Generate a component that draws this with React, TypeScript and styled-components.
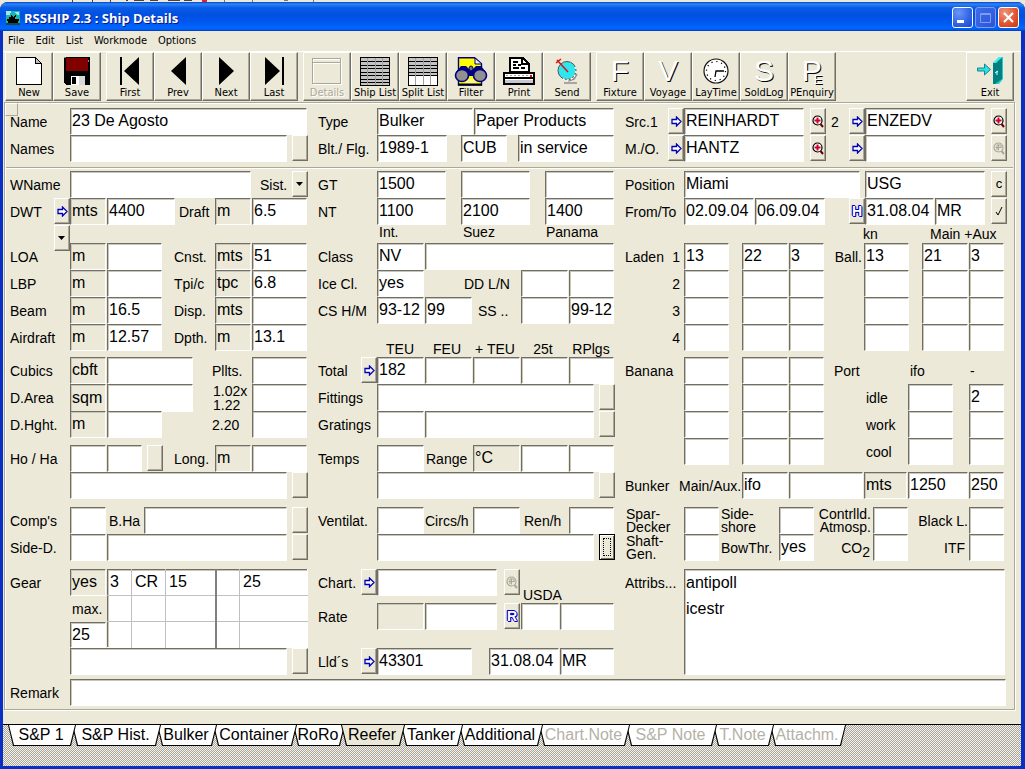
import React from "react";
import styled, { createGlobalStyle, css } from "styled-components";

const face = "#ece9d8";
const dark = "#716f64";
const sans = '"Liberation Sans", Arial, sans-serif';
const ui = '"DejaVu Sans Condensed", Tahoma, "Liberation Sans", sans-serif';

const GlobalStyle = createGlobalStyle`
  *, *::before, *::after { box-sizing: border-box; }
  body { margin: 0; background: ${face}; font-family: ${sans}; color: #000; }
  button, input, select, textarea { font: inherit; color: inherit; margin: 0; border-radius: 0; }
`;

/* ---------- window frame ---------- */

const Desktop = styled.div`
  min-height: 100vh;
  min-width: 960px;
  display: flex;
  flex-direction: column;
`;

const BackStrip = styled.div`
  height: 2px;
  overflow: hidden;
  svg { display: block; margin-left: 72px; }
`;

const Window = styled.main`
  flex: 1;
  display: flex;
  flex-direction: column;
  background: #0a2fc4;
  border-radius: 8px 8px 0 0;
  overflow: hidden;
`;

const TitleBar = styled.header`
  height: 29px;
  display: flex;
  align-items: center;
  gap: 2px;
  padding: 2px 6px 0 6px;
  background: linear-gradient(#0a3fd0 0, #2a86f5 7%, #0a5be6 20%, #0050e0 45%, #0058ee 70%, #0066ff 88%, #0060f8 94%, #0038b8 100%);
`;

const Title = styled.h1`
  flex: 1;
  margin: 0;
  padding-left: 2px;
  color: #fff;
  font: 700 13px/16px "Open Sans", "Noto Sans", sans-serif;
  text-shadow: 1px 1px 0 #0a1883;
`;

const CaptionButton = styled.button<{ $tone: "blue" | "dim" | "red" }>`
  width: 21px;
  height: 21px;
  padding: 0;
  border-radius: 3px;
  border: 1px solid ${(p) => (p.$tone === "dim" ? "#7f9cf0" : "#fff")};
  background: ${(p) =>
    p.$tone === "red"
      ? "radial-gradient(circle at 30% 25%, #f0937a, #e2512c 60%, #c03a14)"
      : p.$tone === "dim"
        ? "linear-gradient(135deg, #3f6ce8, #2a55dc)"
        : "radial-gradient(circle at 30% 25%, #6b96f8, #2f62e4 60%, #1c49c8)"};
  svg { display: block; }
`;

const Client = styled.div`
  flex: 1;
  display: flex;
  flex-direction: column;
  margin: 0 4px 3px 3px;
  background: ${face};
`;

/* ---------- menu and toolbar ---------- */

const MenuBar = styled.nav`
  height: 20px;
  display: flex;
  align-items: center;
  gap: 11px;
  padding-left: 5px;
`;

const MenuItem = styled.button`
  border: 0;
  padding: 0;
  background: none;
  font: 11px/14px ${ui};
`;

const Toolbar = styled.div`
  display: flex;
  gap: 5px;
  padding: 0 7px 0 2px;
  border-top: 1px solid #fff;
`;

const ToolGroup = styled.div<{ $last?: boolean }>`
  display: flex;
  margin-left: ${(p) => (p.$last ? "auto" : "0")};
`;

const ToolButton = styled.button`
  width: 48px;
  height: 49px;
  padding: 3px 0 0;
  display: flex;
  flex-direction: column;
  align-items: center;
  background: ${face};
  border: 1px solid;
  border-color: #fff ${dark} ${dark} #fff;
  box-shadow: inset -1px -1px 0 #aca899;
  font: 11px/14px ${ui};
  white-space: nowrap;
  &:disabled { color: #aca899; text-shadow: 1px 1px 0 #fff; }
`;

const ToolIcon = styled.span`
  height: 30px;
  display: flex;
  align-items: center;
  justify-content: center;
  svg { display: block; }
`;

const Letter = styled.span<{ $small?: boolean }>`
  color: #fff;
  font: ${(p) => (p.$small ? "13px/13px" : "30px/30px")} ${sans};
  align-self: ${(p) => (p.$small ? "flex-end" : "center")};
  margin-left: ${(p) => (p.$small ? "-8px" : "0")};
  text-shadow: 1px 1px 0 #000;
`;

/* ---------- form ---------- */

const Panel = styled.form`
  position: relative;
  margin: 1px 6px 14px 1px;
  padding: 5px 7px 3px 5px;
  border: 1px solid #aca899;
  box-shadow: inset 1px 1px 0 #fff, 1px 1px 0 #fff;
`;

const Corner = styled.span`
  position: absolute;
  left: 0;
  top: 0;
  width: 13px;
  height: 13px;
  border: 1px solid;
  border-color: #fff #aca899 #aca899 #fff;
`;

const Divider = styled.hr`
  height: 2px;
  margin: 5px -6px 2px -4px;
  border: 0;
  border-top: 1px solid #aca899;
  border-bottom: 1px solid #fff;
`;

const Band = styled.section<{ $gap?: number }>`
  display: grid;
  grid-template-columns: 298fr 297fr 382fr;
  column-gap: 10px;
  margin-bottom: ${(p) => p.$gap ?? 0}px;
`;

const Column = styled.div<{ $split?: boolean }>`
  display: flex;
  flex-direction: column;
  min-width: 0;
  ${(p) => p.$split && "justify-content: space-between; gap: 7px;"}
`;

const Row = styled.div<{ $c: number[]; $h?: number; $align?: string }>`
  display: grid;
  grid-template-columns: ${(p) => p.$c.map((n) => `minmax(0, ${n}fr)`).join(" ")};
  height: ${(p) => p.$h ?? 27}px;
  align-items: ${(p) => p.$align ?? "stretch"};
`;

const Gap = styled.span``;

const captionStyle = css<{ $end?: boolean; $pad?: number; $high?: boolean }>`
  align-self: ${(p) => (p.$high ? "start" : "center")};
  font-size: 14px;
  line-height: ${(p) => (p.$high ? 14 : 16)}px;
  white-space: nowrap;
  text-align: ${(p) => (p.$end ? "right" : "left")};
  padding: 0 ${(p) => (p.$end ? p.$pad ?? 0 : 0)}px 0 ${(p) => (p.$end ? 0 : p.$pad ?? 0)}px;
  ${(p) => p.$end && "justify-self: end;"}
  sub { font-size: 14px; line-height: 0; }
`;
const Caption = styled.label`${captionStyle}`;
const Heading = styled.span`${captionStyle}`;

const CenterHeading = styled.span`
  font-size: 14px;
  line-height: 16px;
  text-align: center;
  white-space: nowrap;
`;

const LowHeading = styled.span`
  align-self: end;
  padding-left: 3px;
  font-size: 14px;
  line-height: 16px;
`;

const TwoLine = styled.label<{ $end?: boolean; $tall?: boolean }>`
  align-self: center;
  font-size: 14px;
  line-height: ${(p) => (p.$tall ? 14 : 13)}px;
  white-space: pre;
  padding-left: 1px;
  ${(p) => p.$end && "text-align: right; padding-right: 2px;"}
`;

const sunken = css`
  border: 1px solid;
  border-color: ${dark} #fff #fff ${dark};
  box-shadow: inset 1px 1px 0 #c8c5ba;
  outline: 0;
`;

const Field = styled.input.attrs({ type: "text" })<{ $unit?: boolean }>`
  ${sunken}
  width: calc(100% - 1px);
  height: 100%;
  min-width: 0;
  padding: 0 0 1px 1px;
  font-size: 16px;
  background: ${(p) => (p.$unit ? face : "#fff")};
`;

const Memo = styled.textarea`
  ${sunken}
  width: 100%;
  height: 100%;
  padding: 0 1px;
  font-size: 16px;
  line-height: 26px;
  resize: none;
  overflow: hidden;
  display: block;
  background: #fff;
`;

const raised = css`
  width: 16px;
  height: 26px;
  justify-self: end;
  padding: 0;
  background: ${face};
  border: 1px solid;
  border-color: #fff ${dark} ${dark} #fff;
  box-shadow: inset -1px -1px 0 #aca899;
`;

const MiniButton = styled.button.attrs({ type: "button" })<{ $focus?: boolean }>`
  ${raised}
  display: flex;
  align-items: center;
  justify-content: center;
  font-size: 13px;
  line-height: 16px;
  svg { display: block; flex: none; }
  ${(p) =>
    p.$focus &&
    css`
      border-color: #000;
      outline: 1px dotted #000;
      outline-offset: -5px;
      box-shadow: inset 1px 1px 0 #fff, inset -1px -1px 0 ${dark};
    `}
`;

const Outlined = styled.span`
  color: #fff;
  font-size: 14px;
  font-weight: 700;
  text-shadow: 1px 0 #00c, -1px 0 #00c, 0 1px #00c, 0 -1px #00c, 1px 1px #00c, -1px -1px #00c;
`;

const DropShell = styled.span`
  position: relative;
  justify-self: end;
  width: 16px;
  height: 26px;
  svg { position: absolute; left: 4px; top: 11px; pointer-events: none; }
`;

const Drop = styled.select`
  ${raised}
  appearance: none;
  display: block;
`;

const GearStack = styled.div`
  display: grid;
  grid-template-rows: 27px 26px 26px;
`;

const GearTable = styled.table`
  ${sunken}
  width: 100%;
  height: 79px;
  table-layout: fixed;
  border-collapse: collapse;
  background: #fff;
  td {
    padding: 0 0 2px 3px;
    height: 26px;
    font-size: 16px;
    line-height: 20px;
    white-space: nowrap;
    border: 1px solid #c0c0c0;
  }
  td:first-child { border-left: 0; padding-left: 2px; }
  td:last-child { border-right: 0; }
  tr:first-child td { border-top: 0; }
  tr:last-child td { border-bottom: 0; }
  td:nth-child(4) { border-left: 2px solid #808080; }
`;

/* ---------- bottom tabs ---------- */

const TabStrip = styled.div`
  flex: 1;
  min-height: 42px;
  display: flex;
  align-items: flex-start;
  padding-left: 5px;
  border-top: 1px solid #000;
  background: repeating-conic-gradient(#a8a69c 0 25%, #f4f2ea 0 50%) 0 0 / 2px 2px;
`;

const Tab = styled.button<{ $w: number; $order: number; $on?: boolean }>`
  position: relative;
  z-index: ${(p) => (p.$on ? 20 : p.$order)};
  width: ${(p) => p.$w}px;
  height: 21px;
  flex: none;
  margin-right: -4px;
  padding: 0 2px 2px 0;
  border: 0;
  background: none;
  isolation: isolate;
  font-size: 16px;
  line-height: 18px;
  white-space: nowrap;
  &:disabled { color: #b4b1a6; }
  &::before, &::after {
    content: "";
    position: absolute;
    inset: 0;
    z-index: -2;
    background: #000;
    clip-path: polygon(0 0, 100% 0, calc(100% - 5px) 100%, 5px 100%);
  }
  &::after {
    inset: 0 1px 1px 1px;
    z-index: -1;
    background: ${(p) => (p.$on ? face : "#fff")};
  }
`;

/* ---------- icons ---------- */

const Arrow = () => (
  <svg width="11" height="11" viewBox="0 0 11 11">
    <path d="M1 3.500h4.500V1L10 5.500 5.500 10V7.500H1z" fill="#fff" stroke="#0000b8" strokeWidth="1.300" />
  </svg>
);
const Lens = ({ off }: { off?: boolean }) => (
  <svg width="12" height="13" viewBox="0 0 12 13">
    <circle cx="5.500" cy="5.500" r="4.500" fill={off ? "none" : "#fff"} stroke={off ? "#aca899" : "#000"} strokeWidth="1.200" />
    <path d="M5.500 2.500v6M2.500 5.500h6" stroke={off ? "#aca899" : "#d0002a"} strokeWidth={off ? 1 : 2} />
    {off && <path d="M4 8V3h4v3" fill="none" stroke="#aca899" />}
    <path d="M8.500 9l2.500 3" stroke={off ? "#aca899" : "#600"} strokeWidth="2" />
  </svg>
);
const Down = () => (
  <svg width="7" height="4" viewBox="0 0 7 4"><path d="M0 0h7L3.500 4z" /></svg>
);
const Check = () => (
  <svg width="9" height="10" viewBox="0 0 9 10"><path d="M1 6l2 3 4-8" fill="none" stroke="#000" /></svg>
);

const AppIcon = () => (
  <svg width="14" height="14" viewBox="0 0 14 14" shapeRendering="crispEdges">
    <path d="M0 0h14v14H0z" fill="#19b5b0" />
    <path d="M0 0h5l-1 4H0zM9 1h4v3h-2z" fill="#9fe8ea" />
    <path d="M1 8h2V6h2V4l2 2h1l2-3v2L9 8h4l-1 4H2z" />
    <path d="M0 12h14v2H0z" fill="#0b4f50" />
  </svg>
);

const icons: Record<string, React.ReactNode> = {
  New: (
    <svg width="26" height="28" viewBox="0 0 26 28" shapeRendering="crispEdges">
      <path d="M.500.500h19l6 6v21H.500z" fill="#fff" stroke="#000" />
      <path d="M19.500.500v6h6z" fill="#c0c0c0" stroke="#000" />
    </svg>
  ),
  Save: (
    <svg width="26" height="28" viewBox="0 0 26 28" shapeRendering="crispEdges">
      <path d="M0 0h26v28H2l-2-2z" />
      <path d="M2 1h22v13H2z" fill="#800000" />
      <path d="M0 0h2v1H0zM24 3h1v2h-1z" fill="#888" />
      <path d="M7 19h14v9H7z" fill="#fff" />
      <path d="M8 20h4v7H8z" />
      <path d="M15 19h6v9h-6z" fill="#d8d8d8" />
    </svg>
  ),
  First: (
    <svg width="20" height="28" viewBox="0 0 20 28"><path d="M0 0h2v28H0zM19 0v28L4 14z" /></svg>
  ),
  Prev: (
    <svg width="15" height="28" viewBox="0 0 15 28"><path d="M15 0v28L0 14z" /></svg>
  ),
  Next: (
    <svg width="15" height="28" viewBox="0 0 15 28"><path d="M0 0v28l15-14z" /></svg>
  ),
  Last: (
    <svg width="20" height="28" viewBox="0 0 20 28"><path d="M18 0h2v28h-2zM1 0v28l15-14z" /></svg>
  ),
  Details: (
    <svg width="30" height="27" viewBox="0 0 30 27" shapeRendering="crispEdges">
      <path d="M1.500 1.500h28v25h-28zM1.500 5.500h28" fill="none" stroke="#fff" />
      <path d="M.500.500h28v25H.500zM.500 4.500h28" fill="none" stroke="#aca899" />
    </svg>
  ),
  "Ship List": (
    <svg width="30" height="29" viewBox="0 0 30 29" shapeRendering="crispEdges">
      <path d="M.500.500h29v28H.500z" fill="#c4c4c4" stroke="#000" />
      <path d="M0 4.500h30M0 8.500h30M0 11.500h30M0 15.500h30M0 18.500h30M0 22.500h30M0 25.500h30" stroke="#000" />
      <path d="M7.500 1v27M15.500 1v27M22.500 1v27" stroke="#a0a0a0" />
    </svg>
  ),
  "Split List": (
    <svg width="30" height="29" viewBox="0 0 30 29" shapeRendering="crispEdges">
      <path d="M.500.500h29v28H.500z" fill="#c4c4c4" stroke="#000" />
      <path d="M1 19h28v9H1z" fill="#fff" />
      <path d="M0 4.500h30M0 8.500h30M0 11.500h30M0 15.500h30M0 18.500h30" stroke="#000" />
      <path d="M7.500 1v27M15.500 1v27M22.500 1v27" stroke="#a0a0a0" />
    </svg>
  ),
  Filter: (
    <svg width="34" height="29" viewBox="0 0 34 29">
      <path d="M4.500.700h16l7 6V28h-23z" fill="#ff0" stroke="#000080" strokeWidth="1.400" />
      <path d="M21 1v6h7z" fill="#eee" stroke="#000080" />
      <path d="M2 15l5-6h5l4 4 1-4 1 4 4-4h5l5 6v4H2z" fill="#000080" />
      <path d="M13 22h8l2 5H11z" fill="#fff68a" />
      <ellipse cx="8" cy="18.500" rx="6.500" ry="6" fill="#909090" stroke="#000080" strokeWidth="1.600" />
      <ellipse cx="26" cy="18.500" rx="6.500" ry="6" fill="#909090" stroke="#000080" strokeWidth="1.600" />
      <ellipse cx="17" cy="11.500" rx="2" ry="2.500" fill="#707070" stroke="#000080" />
      <path d="M4 27.500h24" stroke="#000" strokeWidth="2" />
    </svg>
  ),
  Print: (
    <svg width="32" height="28" viewBox="0 0 32 28" shapeRendering="crispEdges">
      <path d="M7 15V1h13l6 6v8z" fill="#fff" stroke="#000" strokeWidth="2" />
      <path d="M19 1v6h7M10 5h5M10 8h3M15 8h3M10 11h6M18 11h4" fill="none" stroke="#000" strokeWidth="2" />
      <path d="M1 16h30v11H1z" fill="#fff" stroke="#000" strokeWidth="2" />
      <path d="M2 21h28" stroke="#000" strokeWidth="2" />
      <path d="M3 18.500h24" stroke="#a0a0a0" strokeDasharray="2 2" />
      <path d="M2 23h28v3H2z" fill="#c8c8d0" />
      <path d="M27 18h2v2h-2z" fill="#e00" />
    </svg>
  ),
  Send: (
    <svg width="24" height="28" viewBox="0 0 24 28">
      <path d="M9 26h13M13 24l6-2 3-5M18 20l-5 3" fill="none" stroke="#909090" strokeWidth="1.600" />
      <circle cx="12" cy="13.500" r="9" fill="#2ee6ee" stroke="#555" />
      <path d="M20 10a9 9 0 0 1-12 12" fill="none" stroke="#fff" strokeWidth="1.500" strokeDasharray="2 2" />
      <path d="M2 3l11 12M1 6l5-4" fill="none" stroke="#d81818" strokeWidth="1.600" />
    </svg>
  ),
  Fixture: <Letter>F</Letter>,
  Voyage: <Letter>V</Letter>,
  LayTime: (
    <svg width="26" height="26" viewBox="0 0 26 26">
      <circle cx="13" cy="13" r="12" fill="#fff" stroke="#111" strokeWidth="1.200" />
      <circle cx="13" cy="13" r="9.500" fill="none" stroke="#000" strokeWidth="1.200" strokeDasharray="1.200 3.775" />
      <path d="M21 13h-8l-1 6" fill="none" stroke="#000" strokeWidth="1.300" />
    </svg>
  ),
  SoldLog: <Letter>S</Letter>,
  PEnquiry: (
    <>
      <Letter>P</Letter>
      <Letter $small>E</Letter>
    </>
  ),
  Exit: (
    <svg width="26" height="28" viewBox="0 0 26 28">
      <path d="M16 6l6-6h4v22l-4 5h-6z" fill="#20d0c8" />
      <path d="M16 6l9-5v21l-7 5h-2z" fill="#008080" />
      <path d="M16 6l6-6h3l-6 6z" fill="#40f0f0" />
      <path d="M20 14v4M18 16l3-2" stroke="#dff" fill="none" />
      <path d="M.500 11h7V7l6 5.500-6 5.500v-4h-7z" fill="#30e0e0" stroke="#108890" />
    </svg>
  ),
};

/* ---------- repeated form parts ---------- */

type TextProps = { name: string; v?: string; unit?: boolean };
const T = ({ name, v = "", unit }: TextProps) => (
  <Field id={name} aria-label={name} defaultValue={v} $unit={unit} readOnly={unit} />
);

const Go = ({ name }: { name: string }) => (
  <MiniButton aria-label={`Open ${name}`}><Arrow /></MiniButton>
);
const More = ({ name, focus }: { name: string; focus?: boolean }) => (
  <MiniButton aria-label={`More ${name}`} $focus={focus} />
);
const DropDown = ({ name }: { name: string }) => (
  <DropShell>
    <Drop aria-label={name}><option value="" /></Drop>
    <Down />
  </DropShell>
);

/* label, memo text and its expand button */
type WideProps = { label?: string; name: string; focus?: boolean; lead?: number };
const WideRow = ({ label, name, focus, lead = 60 }: WideProps) => (
  <Row $c={[lead, 218, 20]}>
    {label ? <Caption htmlFor={name}>{label}</Caption> : <Gap />}
    <T name={name} />
    <More name={name} focus={focus} />
  </Row>
);

const sizes = [
  ["LOA", "", "Cnst.", "mts", "51"],
  ["LBP", "", "Tpi/c", "tpc", "6.8"],
  ["Beam", "16.5", "Disp.", "mts", ""],
  ["Airdraft", "12.57", "Dpth.", "m", "13.1"],
];

const speeds = [
  ["13", "22", "3", "13", "21", "3"],
  ["", "", "", "", "", ""],
  ["", "", "", "", "", ""],
  ["", "", "", "", "", ""],
];

const gear = [
  ["3", "CR", "15", "", "25"],
  ["", "", "", "", ""],
  ["", "", "", "", ""],
];

const toolGroups = [
  ["New", "Save"],
  ["First", "Prev", "Next", "Last"],
  ["Details", "Ship List", "Split List", "Filter", "Print", "Send"],
  ["Fixture", "Voyage", "LayTime", "SoldLog", "PEnquiry"],
  ["Exit"],
];

const tabs: [string, number, boolean?][] = [
  ["S&P 1", 68],
  ["S&P Hist.", 89],
  ["Bulker", 60],
  ["Container", 84],
  ["RoRo", 52],
  ["Reefer", 64],
  ["Tanker", 62],
  ["Additional", 84],
  ["Chart.Note", 91, true],
  ["S&P Note", 91, true],
  ["T.Note", 61, true],
  ["Attachm.", 76, true],
];

const sourceCols = [43, 16, 121, 21, 22, 17, 121, 21];
const boxCols = [59, 36, 59, 36, 58, 36, 60, 36, 2];
const portCols = [59, 46, 12, 47, 36, 41, 42, 46, 15, 36, 2];

export default function App() {
  return (
    <Desktop>
      <GlobalStyle />
      <BackStrip>
        <svg width="244" height="2" viewBox="0 0 244 2" aria-hidden="true">
          <path d="M0 0h1v2H0zM20 0h1v2h-1zM38 0h1v2h-1zM54 0h2v1h-2zM62 0h10v1H62zM78 0h8v1h-8zM96 0h12v1H96zM112 0h8v1h-8z" fill="#444" />
          <path d="M130 0h5v2h-5z" fill="#e02030" />
          <path d="M152 0h1v2h-1zM180 0h1v2h-1zM212 0h4v1h-4zM241 0h1v2h-1z" fill="#777" />
        </svg>
      </BackStrip>
      <Window>
        <TitleBar>
          <AppIcon />
          <Title>RSSHIP 2.3 : Ship Details</Title>
          <CaptionButton $tone="blue" aria-label="Minimize">
            <svg width="19" height="19" viewBox="0 0 19 19"><path d="M4 12h7v3H4z" fill="#fff" /></svg>
          </CaptionButton>
          <CaptionButton $tone="dim" aria-label="Maximize">
            <svg width="19" height="19" viewBox="0 0 19 19">
              <path d="M4.500 5.500h10v9h-10zM4.500 6.500h10" fill="none" stroke="#7f9cf0" />
            </svg>
          </CaptionButton>
          <CaptionButton $tone="red" aria-label="Close">
            <svg width="19" height="19" viewBox="0 0 19 19">
              <path d="M5 5l9 9M14 5l-9 9" stroke="#fff" strokeWidth="2.200" />
            </svg>
          </CaptionButton>
        </TitleBar>

        <Client>
          <MenuBar>
            {["File", "Edit", "List", "Workmode", "Options"].map((m) => (
              <MenuItem key={m}>{m}</MenuItem>
            ))}
          </MenuBar>

          <Toolbar>
            {toolGroups.map((group) => (
              <ToolGroup key={group[0]} $last={group[0] === "Exit"}>
                {group.map((tool) => (
                  <ToolButton key={tool} disabled={tool === "Details"}>
                    <ToolIcon aria-hidden="true">{icons[tool]}</ToolIcon>
                    {tool}
                  </ToolButton>
                ))}
              </ToolGroup>
            ))}
          </Toolbar>

          <Panel>
            <Corner />
            <Band>
              <Column>
                <Row $c={[60, 238]}>
                  <Caption htmlFor="Name">Name</Caption>
                  <T name="Name" v="23 De Agosto" />
                </Row>
                <WideRow label="Names" name="Names" />
              </Column>
              <Column>
                <Row $c={[59, 97, 141]}>
                  <Caption htmlFor="Type">Type</Caption>
                  <T name="Type" v="Bulker" />
                  <T name="Cargo" v="Paper Products" />
                </Row>
                <Row $c={[59, 71, 13, 47, 10, 97]}>
                  <Caption htmlFor="Built">Blt./ Flg.</Caption>
                  <T name="Built" v="1989-1" />
                  <Gap />
                  <T name="Flag" v="CUB" />
                  <Gap />
                  <T name="Status" v="in service" />
                </Row>
              </Column>
              <Column>
                <Row $c={sourceCols}>
                  <Caption htmlFor="Source 1">Src.1</Caption>
                  <Go name="source 1" />
                  <T name="Source 1" v="REINHARDT" />
                  <MiniButton aria-label="Find source 1"><Lens /></MiniButton>
                  <Caption htmlFor="Source 2" $pad={5}>2</Caption>
                  <Go name="source 2" />
                  <T name="Source 2" v="ENZEDV" />
                  <MiniButton aria-label="Find source 2"><Lens /></MiniButton>
                </Row>
                <Row $c={sourceCols}>
                  <Caption htmlFor="Manager">M./O.</Caption>
                  <Go name="manager" />
                  <T name="Manager" v="HANTZ" />
                  <MiniButton aria-label="Find manager"><Lens /></MiniButton>
                  <Gap />
                  <Go name="owner" />
                  <T name="Owner" />
                  <MiniButton aria-label="Find owner" disabled><Lens off /></MiniButton>
                </Row>
              </Column>
            </Band>

            <Divider />

            <Band>
              <Column>
                <Row $c={[60, 182, 36, 20]}>
                  <Caption htmlFor="WName">WName</Caption>
                  <T name="WName" />
                  <Heading $pad={8}>Sist.</Heading>
                  <DropDown name="Sister ships" />
                </Row>
                <Row $c={[44, 16, 37, 69, 39, 37, 56]}>
                  <Caption htmlFor="DWT">DWT</Caption>
                  <Go name="DWT" />
                  <T name="DWT unit" v="mts" unit />
                  <T name="DWT" v="4400" />
                  <Caption htmlFor="Draft" $pad={3}>Draft</Caption>
                  <T name="Draft unit" v="m" unit />
                  <T name="Draft" v="6.5" />
                </Row>
              </Column>
              <Column>
                <Row $c={[59, 70, 14, 70, 14, 70]}>
                  <Heading>GT</Heading>
                  <T name="GT international" v="1500" />
                  <Gap />
                  <T name="GT Suez" />
                  <Gap />
                  <T name="GT Panama" />
                </Row>
                <Row $c={[59, 70, 14, 70, 14, 70]}>
                  <Heading>NT</Heading>
                  <T name="NT international" v="1100" />
                  <Gap />
                  <T name="NT Suez" v="2100" />
                  <Gap />
                  <T name="NT Panama" v="1400" />
                </Row>
              </Column>
              <Column>
                <Row $c={[59, 177, 4, 121, 21]}>
                  <Caption htmlFor="Position">Position</Caption>
                  <T name="Position" v="Miami" />
                  <Gap />
                  <T name="Area" v="USG" />
                  <MiniButton aria-label="Clear position">c</MiniButton>
                </Row>
                <Row $c={[59, 71, 71, 39, 70, 51, 21]}>
                  <Caption htmlFor="From">From/To</Caption>
                  <T name="From" v="02.09.04" />
                  <T name="To" v="06.09.04" />
                  <MiniButton aria-label="Position history"><Outlined>H</Outlined></MiniButton>
                  <T name="Updated" v="31.08.04" />
                  <T name="Updated by" v="MR" />
                  <MiniButton aria-label="Confirm position"><Check /></MiniButton>
                </Row>
              </Column>
            </Band>

            <Band>
              <Column>
                <Row $c={[60, 238]} $h={18} $align="start">
                  <DropDown name="DWT type" />
                </Row>
                {sizes.map(([a, av, b, bu, bv]) => (
                  <Row key={a} $c={[60, 37, 56, 11, 41, 37, 56]}>
                    <Caption htmlFor={a}>{a}</Caption>
                    <T name={`${a} unit`} v="m" unit />
                    <T name={a} v={av} />
                    <Gap />
                    <Caption htmlFor={b}>{b}</Caption>
                    <T name={`${b} unit`} v={bu} unit />
                    <T name={b} v={bv} />
                  </Row>
                ))}
              </Column>
              <Column>
                <Row $c={[59, 84, 84, 70]} $h={18}>
                  <Gap />
                  <Heading $high $pad={2}>Int.</Heading>
                  <Heading $high $pad={2}>Suez</Heading>
                  <Heading $high $pad={1}>Panama</Heading>
                </Row>
                <Row $c={[59, 48, 190]}>
                  <Caption htmlFor="Class">Class</Caption>
                  <T name="Class" v="NV" />
                  <T name="Class notation" />
                </Row>
                <Row $c={[59, 48, 39, 57, 48, 46]}>
                  <Caption htmlFor="Ice class">Ice Cl.</Caption>
                  <T name="Ice class" v="yes" />
                  <Gap />
                  <Caption htmlFor="DD last">DD L/N</Caption>
                  <T name="DD last" />
                  <T name="DD next" />
                </Row>
                <Row $c={[59, 48, 48, 48, 48, 46]}>
                  <Caption htmlFor="CS hull">CS H/M</Caption>
                  <T name="CS hull" v="93-12" />
                  <T name="CS machinery" v="99" />
                  <Caption htmlFor="SS last" $pad={5}>SS ..</Caption>
                  <T name="SS last" />
                  <T name="SS next" v="99-12" />
                </Row>
                <Row $c={[59, 46, 48, 48, 48, 48]} $h={33} $align="end">
                  <Gap />
                  <CenterHeading>TEU</CenterHeading>
                  <CenterHeading>FEU</CenterHeading>
                  <CenterHeading>+ TEU</CenterHeading>
                  <CenterHeading>25t</CenterHeading>
                  <CenterHeading>RPlgs</CenterHeading>
                </Row>
              </Column>
              <Column>
                <Row $c={[238, 67, 77]} $h={18}>
                  <Gap />
                  <Heading>kn</Heading>
                  <Heading>Main +Aux</Heading>
                </Row>
                {speeds.map((s, i) => (
                  <Row key={i} $c={[43, 16, 46, 12, 47, 36, 39, 46, 12, 47, 36, 2]}>
                    {i === 0 ? <Heading>Laden</Heading> : <Gap />}
                    <Heading $end $pad={4}>{i + 1}</Heading>
                    <T name={`Laden ${i + 1} knots`} v={s[0]} />
                    <Gap />
                    <T name={`Laden ${i + 1} main`} v={s[1]} />
                    <T name={`Laden ${i + 1} aux`} v={s[2]} />
                    {i === 0 ? <Heading $end $pad={2}>Ball.</Heading> : <Gap />}
                    <T name={`Ballast ${i + 1} knots`} v={s[3]} />
                    <Gap />
                    <T name={`Ballast ${i + 1} main`} v={s[4]} />
                    <T name={`Ballast ${i + 1} aux`} v={s[5]} />
                  </Row>
                ))}
              </Column>
            </Band>

            <Band $gap={8}>
              <Column $split>
                <div>
                  <Row $c={[60, 37, 87, 18, 40, 56]}>
                    <Caption htmlFor="Cubics">Cubics</Caption>
                    <T name="Cubics unit" v="cbft" unit />
                    <T name="Cubics" />
                    <Gap />
                    <Caption htmlFor="Pallets">Pllts.</Caption>
                    <T name="Pallets" />
                  </Row>
                  <Row $c={[60, 37, 87, 18, 40, 56]}>
                    <Caption htmlFor="Deck area">D.Area</Caption>
                    <T name="Deck area unit" v="sqm" unit />
                    <T name="Deck area" />
                    <Gap />
                    <TwoLine $tall htmlFor="Pallets small">{"1.02x\n1.22"}</TwoLine>
                    <T name="Pallets small" />
                  </Row>
                  <Row $c={[60, 37, 56, 49, 40, 56]}>
                    <Caption htmlFor="Deck height">D.Hght.</Caption>
                    <T name="Deck height unit" v="m" unit />
                    <T name="Deck height" />
                    <Gap />
                    <Caption htmlFor="Pallets tall">2.20</Caption>
                    <T name="Pallets tall" />
                  </Row>
                </div>
                <div>
                  <Row $c={[60, 37, 36, 20, 11, 41, 37, 56]}>
                    <Caption htmlFor="Holds">Ho / Ha</Caption>
                    <T name="Holds" />
                    <T name="Hatches" />
                    <More name="holds" />
                    <Gap />
                    <Caption htmlFor="Longest">Long.</Caption>
                    <T name="Longest unit" v="m" unit />
                    <T name="Longest" />
                  </Row>
                  <WideRow name="Hold remarks" />
                </div>
              </Column>
              <Column $split>
                <div>
                  <Row $c={[43, 16, 48, 48, 48, 48, 46]}>
                    <Caption htmlFor="Total TEU">Total</Caption>
                    <Go name="containers" />
                    <T name="Total TEU" v="182" />
                    <T name="Total FEU" />
                    <T name="Additional TEU" />
                    <T name="25 tons" />
                    <T name="Reefer plugs" />
                  </Row>
                  <WideRow lead={59} label="Fittings" name="Fittings" />
                  <Row $c={[59, 48, 170, 20]}>
                    <Caption htmlFor="Gratings">Gratings</Caption>
                    <T name="Gratings" />
                    <T name="Gratings remarks" />
                    <More name="gratings" />
                  </Row>
                </div>
                <div>
                  <Row $c={[59, 48, 48, 48, 48, 46]}>
                    <Caption htmlFor="Temperatures">Temps</Caption>
                    <T name="Temperatures" />
                    <Caption htmlFor="Range from" $pad={1}>Range</Caption>
                    <T name="Range unit" v="°C" unit />
                    <T name="Range from" />
                    <T name="Range to" />
                  </Row>
                  <WideRow lead={59} name="Temperature remarks" />
                </div>
              </Column>
              <Column $split>
                <div>
                  <Row $c={[59, 46, 12, 47, 36, 9, 76, 60, 37]}>
                    <Caption htmlFor="Banana 1 knots">Banana</Caption>
                    <T name="Banana 1 knots" />
                    <Gap />
                    <T name="Banana 1 main" />
                    <T name="Banana 1 aux" />
                    <Gap />
                    <Heading>Port</Heading>
                    <Heading>ifo</Heading>
                    <Heading>-</Heading>
                  </Row>
                  {[["idle", "2"], ["work", ""], ["cool", ""]].map(([p, v], i) => (
                    <Row key={p} $c={portCols}>
                      <Gap />
                      <T name={`Banana ${i + 2} knots`} />
                      <Gap />
                      <T name={`Banana ${i + 2} main`} />
                      <T name={`Banana ${i + 2} aux`} />
                      <Gap />
                      <Caption htmlFor={`Port ${p} ifo`}>{p}</Caption>
                      <T name={`Port ${p} ifo`} />
                      <Gap />
                      <T name={`Port ${p} other`} v={v} />
                    </Row>
                  ))}
                </div>
                <Row $c={[54, 63, 47, 75, 44, 61, 36, 2]}>
                  <Heading>Bunker</Heading>
                  <Caption htmlFor="Bunker main">Main/Aux.</Caption>
                  <T name="Bunker main" v="ifo" />
                  <T name="Bunker aux" />
                  <T name="Bunker unit" v="mts" unit />
                  <T name="Bunker main quantity" v="1250" />
                  <T name="Bunker aux quantity" v="250" />
                </Row>
              </Column>
            </Band>

            <Band $gap={8}>
              <Column>
                <Row $c={[60, 37, 37, 144, 20]}>
                  <Caption htmlFor="Compartments">Comp's</Caption>
                  <T name="Compartments" />
                  <Caption htmlFor="B.Ha" $pad={2}>B.Ha</Caption>
                  <T name="B.Ha" />
                  <More name="compartments" />
                </Row>
                <Row $c={[60, 37, 181, 20]}>
                  <Caption htmlFor="Side doors">Side-D.</Caption>
                  <T name="Side doors" />
                  <T name="Side door remarks" />
                  <More name="side doors" />
                </Row>
              </Column>
              <Column>
                <Row $c={[59, 48, 48, 48, 48, 46]}>
                  <Caption htmlFor="Ventilation">Ventilat.</Caption>
                  <T name="Ventilation" />
                  <Caption htmlFor="Circulations">Circs/h</Caption>
                  <T name="Circulations" />
                  <Caption htmlFor="Renewals" $pad={3}>Ren/h</Caption>
                  <T name="Renewals" />
                </Row>
                <WideRow lead={59} name="Ventilation remarks" focus />
              </Column>
              <Column>
                <Row $c={boxCols}>
                  <TwoLine htmlFor="Spar decker">{"Spar-\nDecker"}</TwoLine>
                  <T name="Spar decker" />
                  <TwoLine htmlFor="Side shore">{"Side-\nshore"}</TwoLine>
                  <T name="Side shore" />
                  <TwoLine $end htmlFor="Controlled atmosphere">{"Contrlld.\nAtmosp."}</TwoLine>
                  <T name="Controlled atmosphere" />
                  <Caption $end $pad={1} htmlFor="Black list">Black L.</Caption>
                  <T name="Black list" />
                </Row>
                <Row $c={boxCols}>
                  <TwoLine htmlFor="Shaft generator">{"Shaft-\nGen."}</TwoLine>
                  <T name="Shaft generator" />
                  <Caption $pad={1} htmlFor="Bow thruster">BowThr.</Caption>
                  <T name="Bow thruster" v="yes" />
                  <Caption $end $pad={3} htmlFor="CO2">CO<sub>2</sub></Caption>
                  <T name="CO2" />
                  <Caption $end $pad={4} htmlFor="ITF">ITF</Caption>
                  <T name="ITF" />
                </Row>
              </Column>
            </Band>

            <Band $gap={4}>
              <Column>
                <Row $c={[60, 37, 201]} $h={79}>
                  <Row $c={[1]}><Caption htmlFor="Gear">Gear</Caption></Row>
                  <GearStack>
                    <T name="Gear" v="yes" unit />
                    <Caption htmlFor="Gear maximum" $pad={2}>max.</Caption>
                    <T name="Gear maximum" v="25" />
                  </GearStack>
                  <GearTable aria-label="Gear">
                    <colgroup>
                      <col style={{ width: "12%" }} />
                      <col style={{ width: "17%" }} />
                      <col style={{ width: "25%" }} />
                      <col style={{ width: "12%" }} />
                      <col style={{ width: "34%" }} />
                    </colgroup>
                    <tbody>
                      {gear.map((r, i) => (
                        <tr key={i}>{r.map((c, j) => <td key={j}>{c}</td>)}</tr>
                      ))}
                    </tbody>
                  </GearTable>
                </Row>
                <WideRow name="Gear remarks" />
              </Column>
              <Column $split>
                <div>
                  <Row $c={[43, 16, 121, 22, 95]} $h={34} $align="start">
                    <Row $c={[1]}><Caption htmlFor="Charterer">Chart.</Caption></Row>
                    <Go name="charterer" />
                    <Row $c={[1]}><T name="Charterer" /></Row>
                    <MiniButton aria-label="Find charterer" disabled><Lens off /></MiniButton>
                    <LowHeading>USDA</LowHeading>
                  </Row>
                  <Row $c={[59, 48, 73, 22, 1, 39, 55]}>
                    <Caption htmlFor="Rate">Rate</Caption>
                    <T name="Rate currency" unit />
                    <T name="Rate" />
                    <MiniButton aria-label="Rate history"><Outlined>R</Outlined></MiniButton>
                    <Gap />
                    <T name="USDA" />
                    <T name="USDA date" />
                  </Row>
                </div>
                <Row $c={[43, 16, 96, 16, 71, 55]}>
                  <Caption htmlFor="Lloyds number">Lld´s</Caption>
                  <Go name="Lloyds" />
                  <T name="Lloyds number" v="43301" />
                  <Gap />
                  <T name="Lloyds date" v="31.08.04" />
                  <T name="Lloyds user" v="MR" />
                </Row>
              </Column>
              <Row $c={[59, 321, 2]} $h={106}>
                <Row $c={[1]}><Caption htmlFor="Attributes">Attribs...</Caption></Row>
                <Memo id="Attributes" defaultValue={"antipoll\nicestr"} />
              </Row>
            </Band>

            <Row $c={[60, 937]}>
              <Caption htmlFor="Remark">Remark</Caption>
              <T name="Remark" />
            </Row>
          </Panel>

          <TabStrip role="tablist">
            {tabs.map(([name, w, off], i) => (
              <Tab
                key={name}
                role="tab"
                $w={w}
                $order={tabs.length - i}
                $on={name === "Reefer"}
                aria-selected={name === "Reefer"}
                disabled={off}
              >
                {name}
              </Tab>
            ))}
          </TabStrip>
        </Client>
      </Window>
    </Desktop>
  );
}
